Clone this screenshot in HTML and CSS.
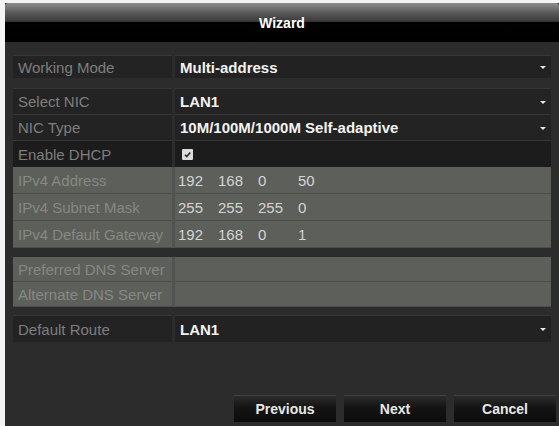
FILE: index.html
```html
<!DOCTYPE html>
<html>
<head>
<meta charset="utf-8">
<link rel="stylesheet" href="styles.css">
</head>
<body>
<div class="frame">
  <div class="titlebar">Wizard</div>
  <div class="content">
    <div class="row r-mode">
      <div class="label">Working Mode</div>
      <div class="value select">Multi-address<span class="arrow"></span></div>
    </div>
    <div class="group-dark">
      <div class="row r26">
        <div class="label">Select NIC</div>
        <div class="value select">LAN1<span class="arrow"></span></div>
      </div>
      <div class="row r26">
        <div class="label">NIC Type</div>
        <div class="value select">10M/100M/1000M Self-adaptive<span class="arrow"></span></div>
      </div>
      <div class="row r27">
        <div class="label">Enable DHCP</div>
        <div class="value">
          <span class="checkbox">
            <svg width="11" height="11" viewBox="0 0 11 11"><path d="M3 5.8 L4.8 7.6 L8.2 3.6" fill="none" stroke="#2a2a2a" stroke-width="1.6"/></svg>
          </span>
        </div>
      </div>
    </div>
    <div class="group-gray">
      <div class="row g27">
        <div class="label">IPv4 Address</div>
        <div class="value ip"><span>192</span><span>168</span><span>0</span><span>50</span></div>
      </div>
      <div class="row g27">
        <div class="label">IPv4 Subnet Mask</div>
        <div class="value ip"><span>255</span><span>255</span><span>255</span><span>0</span></div>
      </div>
      <div class="row g27">
        <div class="label">IPv4 Default Gateway</div>
        <div class="value ip"><span>192</span><span>168</span><span>0</span><span>1</span></div>
      </div>
    </div>
    <div class="group-gray dns">
      <div class="row g25">
        <div class="label">Preferred DNS Server</div>
        <div class="value ip"></div>
      </div>
      <div class="row g25">
        <div class="label">Alternate DNS Server</div>
        <div class="value ip"></div>
      </div>
    </div>
    <div class="row r-route">
      <div class="label">Default Route</div>
      <div class="value select">LAN1<span class="arrow"></span></div>
    </div>
  </div>
  <div class="buttons">
    <div class="btn">Previous</div>
    <div class="btn">Next</div>
    <div class="btn">Cancel</div>
  </div>
</div>
</body>
</html>
```

FILE: styles.css
```css
html, body {
  margin: 0;
  padding: 0;
  background: #f4f4f4;
}
body {
  font-family: "Liberation Sans", Arial, sans-serif;
  overflow: hidden;
}
.frame {
  margin: 3px 0 0 5px;
  width: 554px;
  height: 423px;
  background: #2c2c2c;
  display: flex;
  flex-direction: column;
}
.titlebar {
  height: 39px;
  border-radius: 3px 3px 0 0;
  background: linear-gradient(to bottom, #8e8e8e 0%, #5a5a5a 25%, #3a3a3a 47%, #020202 50%, #000 100%);
  color: #fff;
  font-weight: bold;
  font-size: 14px;
  display: flex;
  align-items: center;
  justify-content: center;
  padding-bottom: 0;
}
.content {
  padding: 13px 8px 0 8px;
  display: flex;
  flex-direction: column;
}
.row {
  display: grid;
  grid-template-columns: 159px 376px;
  column-gap: 3px;
}
.label {
  font-size: 15px;
  color: #7e7e7e;
  padding-left: 5px;
  display: flex;
  align-items: center;
  white-space: nowrap;
  overflow: hidden;
}
.value {
  position: relative;
  font-size: 15px;
  font-weight: bold;
  color: #f2f2f2;
  padding-left: 5px;
  display: flex;
  align-items: center;
  white-space: nowrap;
}
.r-mode {
  height: 23px;
  margin-bottom: 10px;
}
.r-mode .label, .r-mode .value,
.group-dark .label, .group-dark .value,
.r-route .label, .r-route .value {
  background: #232323;
  border-top: 1px solid #363636;
}
.r-mode .value, .r-route .value {
  background: #222222;
}
.r26 { height: 26px; }
.r27 { height: 27px; }
.group-dark .r27 .label, .group-dark .r27 .value {
  background: #1c1c1c;
}
.arrow {
  position: absolute;
  right: 5px;
  top: 50%;
  margin-top: -1px;
  width: 0;
  height: 0;
  border-left: 3px solid transparent;
  border-right: 3px solid transparent;
  border-top: 3px solid #e8e8e8;
}
.checkbox {
  display: inline-block;
  width: 11px;
  height: 11px;
  margin-left: 2px;
  background: #dcdcdc;
  border-radius: 1px;
  line-height: 0;
}
.group-gray {
  background: #50534f;
  border-radius: 3px;
}
.group-gray .row {
  column-gap: 3px;
}
.group-gray .label, .group-gray .value {
  background: #5c5f5a;
  border-bottom: 1px solid #4b4e4a;
}
.group-gray .label {
  color: #858983;
}
.g27 { height: 27px; }
.g25 { height: 25px; }
.group-gray.dns {
  margin-top: 9px;
}
.ip {
  font-weight: normal;
  color: #d4d4d4;
  padding-left: 3px;
}
.ip span {
  width: 40px;
}
.r-route {
  height: 27px;
  margin-top: 8px;
}
.buttons {
  margin-top: auto;
  display: flex;
  justify-content: flex-end;
  gap: 8px;
  padding: 0 3px 4px 0;
}
.btn {
  width: 102px;
  height: 27px;
  background: linear-gradient(to bottom, #2c2c2c 0%, #141414 45%, #0c0c0c 100%);
  border-top: 1px solid #404040;
  box-sizing: border-box;
  color: #e8e8e8;
  font-size: 14px;
  font-weight: bold;
  display: flex;
  align-items: center;
  justify-content: center;
}
```
